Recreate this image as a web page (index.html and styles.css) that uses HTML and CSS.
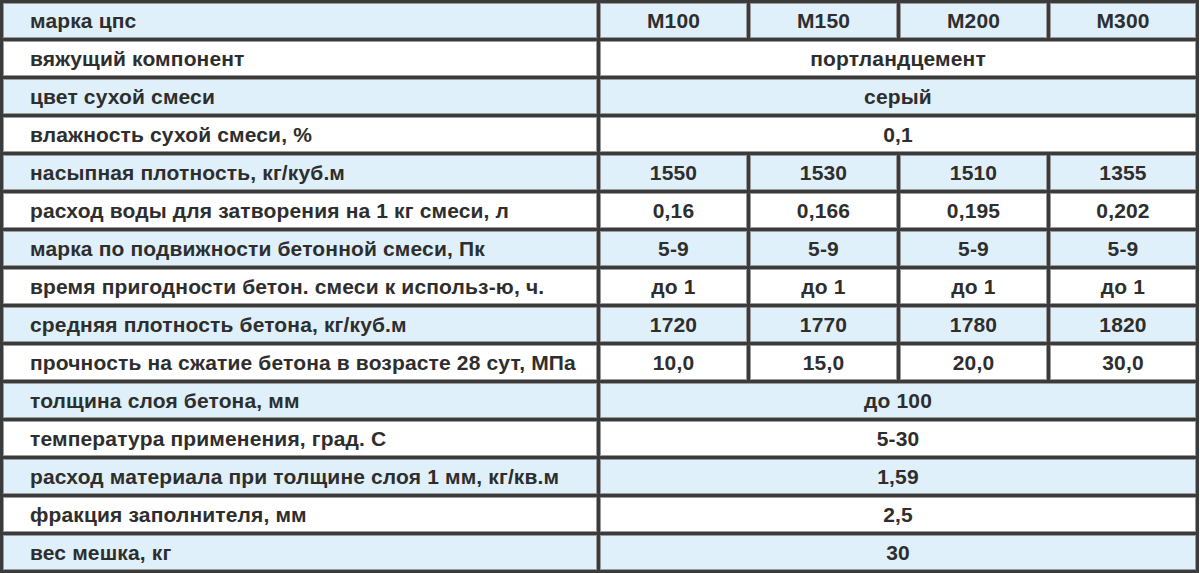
FILE: index.html
```html
<!DOCTYPE html>
<html lang="ru">
<head>
<meta charset="utf-8">
<title>Характеристики ЦПС</title>
<link rel="stylesheet" href="styles.css">
</head>
<body>
<table class="specs">
  <colgroup>
    <col class="col-name">
    <col class="col-val">
    <col class="col-val">
    <col class="col-val">
    <col class="col-last">
  </colgroup>
  <tbody>
    <tr class="blue"><td class="name">марка цпс</td><td>М100</td><td>М150</td><td>М200</td><td>М300</td></tr>
    <tr class="white"><td class="name">вяжущий компонент</td><td colspan="4">портландцемент</td></tr>
    <tr class="blue"><td class="name">цвет сухой смеси</td><td colspan="4">серый</td></tr>
    <tr class="white"><td class="name">влажность сухой смеси, %</td><td colspan="4">0,1</td></tr>
    <tr class="blue"><td class="name">насыпная плотность, кг/куб.м</td><td>1550</td><td>1530</td><td>1510</td><td>1355</td></tr>
    <tr class="white"><td class="name">расход воды для затворения на 1 кг смеси, л</td><td>0,16</td><td>0,166</td><td>0,195</td><td>0,202</td></tr>
    <tr class="blue"><td class="name">марка по подвижности бетонной смеси, Пк</td><td>5-9</td><td>5-9</td><td>5-9</td><td>5-9</td></tr>
    <tr class="white"><td class="name">время пригодности бетон. смеси к использ-ю, ч.</td><td>до 1</td><td>до 1</td><td>до 1</td><td>до 1</td></tr>
    <tr class="blue"><td class="name">средняя плотность бетона, кг/куб.м</td><td>1720</td><td>1770</td><td>1780</td><td>1820</td></tr>
    <tr class="white"><td class="name">прочность на сжатие бетона в возрасте 28 сут, МПа</td><td>10,0</td><td>15,0</td><td>20,0</td><td>30,0</td></tr>
    <tr class="blue"><td class="name">толщина слоя бетона, мм</td><td colspan="4">до 100</td></tr>
    <tr class="white"><td class="name">температура применения, град. С</td><td colspan="4">5-30</td></tr>
    <tr class="blue"><td class="name">расход материала при толщине слоя 1 мм, кг/кв.м</td><td colspan="4">1,59</td></tr>
    <tr class="white"><td class="name">фракция заполнителя, мм</td><td colspan="4">2,5</td></tr>
    <tr class="blue"><td class="name">вес мешка, кг</td><td colspan="4">30</td></tr>
  </tbody>
</table>
</body>
</html>
```

FILE: styles.css
```css
html, body {
  margin: 0;
  padding: 0;
  background: #ffffff;
}

.specs {
  table-layout: fixed;
  border-collapse: separate;
  border-spacing: 3px;
  background: #3b3b3b;
  width: 1199px;
  font-family: "Liberation Sans", Arial, sans-serif;
  font-weight: bold;
  font-size: 21px;
  letter-spacing: 0.15px;
  color: #2e2e2e;
}

.col-name { width: 594px; }
.col-val { width: 147px; }
.col-last { width: 146px; }

.specs td {
  height: 35px;
  padding: 0;
  line-height: 24px;
  text-align: center;
  vertical-align: middle;
  box-shadow: inset 0 0 0 1px #9a9a9a;
  white-space: nowrap;
  overflow: hidden;
}

.specs td.name {
  text-align: left;
  padding-left: 27px;
}

.blue td { background: #dff0fb; }
.white td { background: #ffffff; }
```
